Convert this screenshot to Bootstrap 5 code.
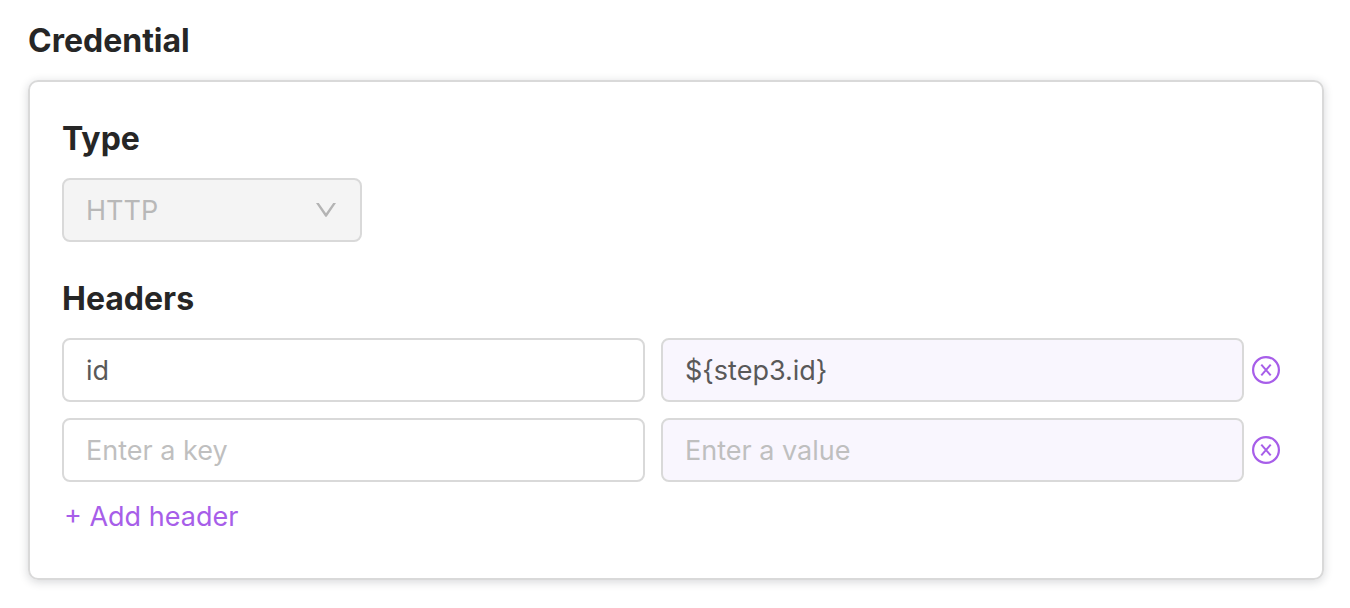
<!DOCTYPE html>
<html lang="en">
<head>
<meta charset="utf-8">
<meta name="viewport" content="width=device-width, initial-scale=1">
<title>Credential</title>
<link href="https://cdn.jsdelivr.net/npm/bootstrap@5.3.0/dist/css/bootstrap.min.css" rel="stylesheet">
<style>
  body { font-family: Inter, sans-serif; font-size: 27px; line-height: 32px; color: #595959; background: #fff; }
  .page { padding: 22px 26px 28px 28px; }
  .title { font-size: 32px; font-weight: 700; line-height: 38px; color: #262626; margin-bottom: 20px; display: block; }
  .panel { border: 2px solid #d9d9d9; border-radius: 10px; padding: 38px 32px 45px; box-shadow: 0 2px 10px rgba(30, 35, 45, .18); }
  .field, .field:focus { height: 64px; border: 2px solid #d9d9d9; border-radius: 8px; padding: 0 22px; font-size: 27px; line-height: 32px; color: #595959; }
  .field::placeholder { color: #bfbfbf; opacity: 1; }
  .field-value, .field-value:focus { background-color: #f9f6fe; }
  .type-select { width: 300px; margin-bottom: 38px; padding-top: 2px; }
  .type-select:disabled { color: #b8b8b8; opacity: 1; background-color: #f4f4f4; background-size: 20px 14px; background-position: right 24px center;
    background-image: url("data:image/svg+xml,%3Csvg xmlns='http://www.w3.org/2000/svg' viewBox='0 0 20 14'%3E%3Cpath d='M0 0H2.800L10 10.300 17.200 0H20L10.800 13.500Q10 14.300 9.200 13.500Z' fill='%23b4b4b4'/%3E%3C/svg%3E"); }
  .header-row { margin-bottom: 16px; padding-right: 10px; }
  .remove { width: 28px; height: 28px; color: #a75ee9; }
  .add { color: #a75ee9; margin: 19px 0 0 2px; font-size: 27px; line-height: 32px; }
  .add:hover, .remove:hover { color: #8b3fd1; }
</style>
</head>
<body>
<main class="page">
  <h1 class="title">Credential</h1>
  <section class="panel">
    <label class="title" for="type">Type</label>
    <select class="form-select field type-select" id="type" disabled>
      <option selected>HTTP</option>
    </select>
    <h2 class="title">Headers</h2>
    <div class="header-row d-flex align-items-center gap-2">
      <div class="d-flex flex-grow-1 gap-3">
        <input class="form-control field" type="text" value="id" placeholder="Enter a key" aria-label="Key 1">
        <input class="form-control field field-value" type="text" value="${step3.id}" placeholder="Enter a value" aria-label="Value 1">
      </div>
      <button class="btn remove border-0 p-0 d-flex flex-shrink-0" type="button" aria-label="Remove header 1">
        <svg width="28" height="28" viewBox="0 0 28 28" fill="none" stroke="currentColor" aria-hidden="true"><circle cx="14" cy="14" r="12.900" stroke-width="2.200"/><path d="M9.300 8.600 18.700 19.400M18.700 8.600 9.300 19.400" stroke-width="2"/></svg>
      </button>
    </div>
    <div class="header-row d-flex align-items-center gap-2">
      <div class="d-flex flex-grow-1 gap-3">
        <input class="form-control field" type="text" placeholder="Enter a key" aria-label="Key 2">
        <input class="form-control field field-value" type="text" placeholder="Enter a value" aria-label="Value 2">
      </div>
      <button class="btn remove border-0 p-0 d-flex flex-shrink-0" type="button" aria-label="Remove header 2">
        <svg width="28" height="28" viewBox="0 0 28 28" fill="none" stroke="currentColor" aria-hidden="true"><circle cx="14" cy="14" r="12.900" stroke-width="2.200"/><path d="M9.300 8.600 18.700 19.400M18.700 8.600 9.300 19.400" stroke-width="2"/></svg>
      </button>
    </div>
    <button class="btn add border-0 p-0 d-block" type="button">+ Add header</button>
  </section>
</main>
<script src="https://cdn.jsdelivr.net/npm/bootstrap@5.3.0/dist/js/bootstrap.bundle.min.js"></script>
</body>
</html>
